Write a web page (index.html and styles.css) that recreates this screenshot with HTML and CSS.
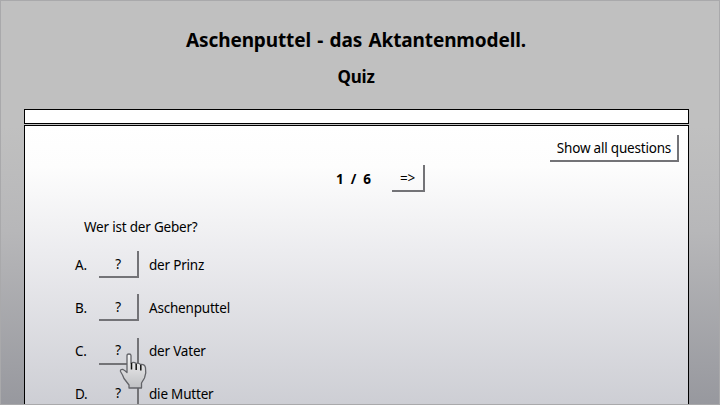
FILE: index.html
```html
<!DOCTYPE html>
<html lang="de">
<head>
<meta charset="utf-8">
<title>Aschenputtel - das Aktantenmodell.</title>
<link rel="stylesheet" href="styles.css">
</head>
<body>
<div class="page">
  <header class="titles">
    <h1>Aschenputtel - das Aktantenmodell.</h1>
    <h2>Quiz</h2>
  </header>
  <nav class="navbar"></nav>
  <main class="quiz">
    <div class="toolbar"><button class="btn show-all">Show all questions</button></div>
    <div class="pager"><span class="count">1 / 6</span><button class="btn next">=&gt;</button></div>
    <p class="question">Wer ist der Geber?</p>
    <ol class="answers">
      <li><span class="letter">A.</span><button class="btn pick">?</button><span class="text">der Prinz</span></li>
      <li><span class="letter">B.</span><button class="btn pick">?</button><span class="text">Aschenputtel</span></li>
      <li><span class="letter">C.</span><button class="btn pick">?</button><span class="text">der Vater</span></li>
      <li><span class="letter">D.</span><button class="btn pick">?</button><span class="text">die Mutter</span></li>
    </ol>
  </main>
  <svg class="cursor" width="30" height="38" viewBox="0 0 30 38">
    <defs><linearGradient id="hand" x1="0" y1="0" x2="0" y2="1"><stop offset="0" stop-color="#f4f4f5"/><stop offset="1" stop-color="#bfc0c3"/></linearGradient></defs>
    <path d="M9 3.500Q9 2 11 2Q13 2 13 3.500V11Q16 9.500 18 11.500Q20.500 10.500 22.500 12.500Q27 12 27.500 16Q28.500 21 26.500 26L23.500 31V36H11V33L6 26.500Q4.500 22.500 2.500 19.500Q2 17 5 17.500Q7 18.500 9 20.500Z" fill="url(#hand)" stroke="#626368" stroke-width="1.300" stroke-linejoin="round"/>
    <path d="M13.500 11V17.500M18.200 12V18M22.800 13V18.500" fill="none" stroke="#111" stroke-width="1.500"/>
  </svg>
</div>
</body>
</html>
```
FILE: styles.css
```css
* { box-sizing: border-box; }
body { margin: 0; overflow: hidden; font: 13.5px/20px "Noto Sans", "Open Sans", sans-serif; letter-spacing: -0.2px; color: #000; }
.page { position: relative; height: 405px; overflow: hidden; padding: 0 30px 0 23px; border: 1px solid #a9a9ab; background: linear-gradient(#c0c0c0 0, #c0c0c0 125px, #b7b7b9 230px, #97989e 405px); }
.titles { height: 108px; padding: 27px 1px 0 0; text-align: center; }
h1, h2 { margin: 0; font-weight: 700; line-height: 24px; }
h1 { font-size: 19px; letter-spacing: -0.12px; word-spacing: 1.5px; }
h2 { margin-top: 13px; font-size: 17px; }
.navbar { height: 15px; margin-bottom: 1px; border: 1px solid #000; background: #fff; }
.quiz { height: 300px; border: 1px solid #000; background: linear-gradient(#fff 0, #fdfdfd 40px, #ececef 125px, #cdced4 280px); }
.toolbar { display: flex; justify-content: flex-end; padding: 9px 9px 0 0; }
.btn { display: block; height: 27px; margin: 0; padding: 0; border: solid #737377; border-width: 0 2px 2px 0; background: none; font: inherit; letter-spacing: inherit; text-align: center; }
.show-all { padding-left: 1px; width: 129px; white-space: nowrap; }
.pager { display: flex; align-items: center; margin: 3px 0 0 311px; }
.count { width: 56px; font-weight: 700; letter-spacing: 0.2px; word-spacing: 3px; }
.next { width: 33px; }
.question { margin: 25px 0 0 59px; }
.answers { list-style: none; margin: 14px 0 0 50px; padding: 0; }
.answers li { display: flex; align-items: center; height: 27px; margin-bottom: 16.3px; }
.letter { width: 24px; }
.pick { width: 40px; }
.text { margin-left: 10px; }
.cursor { position: absolute; left: 117px; top: 351px; }
```
